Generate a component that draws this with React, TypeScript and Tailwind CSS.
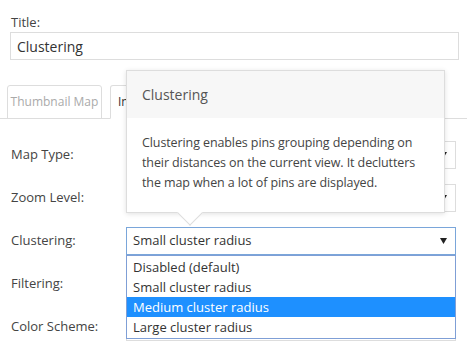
import React from "react";

const Caret = () => (
  <svg width="7" height="6" viewBox="0 0 7 6" className="shrink-0">
    <polygon points="0,0 7,0 3.5,6" fill="#222" />
  </svg>
);

function SelectBox({ value, focused }: { value?: string; focused?: boolean }) {
  return (
    <div
      className={`flex h-[28px] w-[330px] items-center justify-between border bg-white pl-[6px] pr-[8px] text-[13px] text-[#333] ${
        focused ? "border-[#7aa6da]" : "border-[#ddd]"
      }`}
    >
      <span>{value}</span>
      <Caret />
    </div>
  );
}

const options = ["Disabled (default)", "Small cluster radius", "Medium cluster radius", "Large cluster radius"];

export default function App() {
  return (
    <div className="h-[347px] w-[467px] overflow-hidden bg-white font-['Open_Sans',sans-serif] text-[13px] text-[#444]">
      <div className="px-[10px] pt-[13px]">
        <div className="pl-[1px] leading-[18px]">Title:</div>
        <div className="mt-[1px] flex h-[28px] w-[449px] items-center border border-[#ddd] px-[6px] text-[14px] text-[#333]">
          Clustering
        </div>
      </div>

      <div className="mt-[25px] flex items-end gap-[8px] border-b border-[#ddd] pl-[7px]">
        <div className="-mb-px flex h-[34px] w-[95px] items-center justify-center rounded-t-[3px] border border-[#ddd] text-[12px] text-[#aaa]">
          Thumbnail Map
        </div>
        <div className="-mb-px flex h-[34px] items-center rounded-t-[3px] border border-b-white border-[#ddd] bg-white px-[7px] text-[12px] text-[#333]">
          Interactive Map
        </div>
      </div>

      <div className="mt-[22px] grid grid-cols-[126px_330px] gap-y-[15px]">
        <div className="flex items-center pl-[11px]">Map Type:</div>
        <SelectBox />
        <div className="flex items-center pl-[11px]">Zoom Level:</div>
        <SelectBox />
        <div className="flex items-center pl-[11px]">Clustering:</div>
        <div className="relative z-10">
          <SelectBox value="Small cluster radius" focused />

          {/* tooltip */}
          <div className="absolute bottom-[calc(100%+14px)] left-0 w-[319px] border border-[#ddd] bg-white shadow-[0_1px_5px_rgba(0,0,0,0.12)]">
            <div className="flex h-[47px] items-center bg-[#f7f7f7] px-[15px] text-[14px] text-[#555]">Clustering</div>
            <div className="whitespace-nowrap px-[15px] pb-[19px] pt-[15px] text-[12.5px] leading-[20px] tracking-[-0.1px] text-[#444]">
              Clustering enables pins grouping depending on
              <br />
              their distances on the current view. It declutters
              <br />
              the map when a lot of pins are displayed.
            </div>
            <div className="absolute -bottom-[10px] left-[54px] h-[18px] w-[18px] rotate-45 border-b border-r border-[#ddd] bg-white" />
          </div>

          {/* open list */}
          <div className="absolute left-0 top-full w-[330px] border border-[#7f9fd6] bg-white py-[1px]">
            {options.map((o) => (
              <div
                key={o}
                className={`h-[20px] pl-[6px] leading-[20px] ${
                  o === "Medium cluster radius" ? "bg-[#1e90ff] text-white" : "text-[#333]"
                }`}
              >
                {o}
              </div>
            ))}
          </div>
        </div>
        <div className="flex items-center pl-[11px]">Filtering:</div>
        <SelectBox />
        <div className="flex items-center pl-[11px]">Color Scheme:</div>
        <SelectBox />
      </div>
    </div>
  );
}
